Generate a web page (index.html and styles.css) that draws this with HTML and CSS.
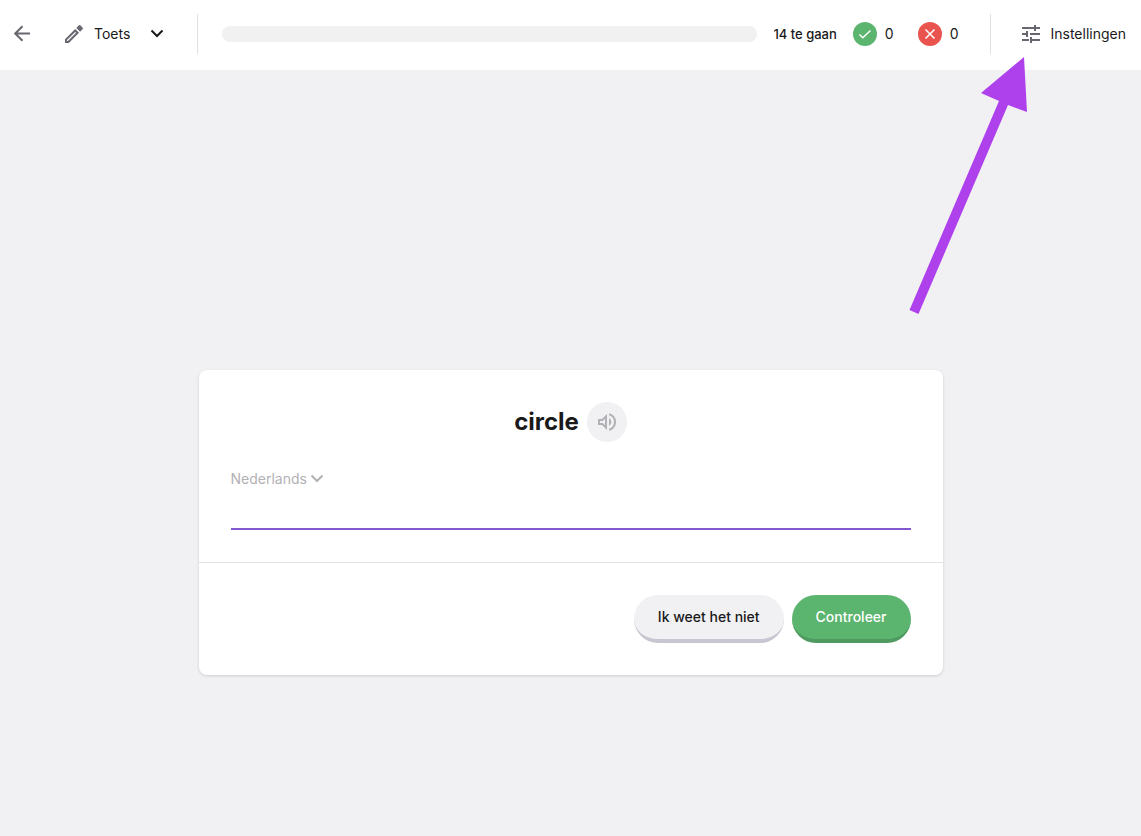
FILE: index.html
```html
<!DOCTYPE html>
<html lang="nl">
<head>
  <meta charset="UTF-8">
  <meta name="viewport" content="width=device-width, initial-scale=1.0">
  <title>Toets</title>
  <link rel="stylesheet" href="styles.css">
</head>
<body>
  <header class="topbar">
    <div class="mode">
      <button type="button" class="icon-button" aria-label="Terug">
        <svg width="20" height="20" viewBox="0 0 20 20" fill="none" stroke="#69666f" stroke-width="2"><path d="M18 9.500H3.500M10.500 2.200L3.200 9.500l7.300 7.300"/></svg>
      </button>
      <div class="mode-picker">
        <svg width="20" height="20" viewBox="0 0 20 20"><path fill="#69666f" fill-rule="evenodd" d="M1 15.2V19h3.8L15 8.8 11.2 5zM3 16.1l8.2-8.2.9.9L3.9 17H3zM12.3 3.9l3.8 3.8 2.6-2.6a1 1 0 0 0 0-1.4l-2.4-2.4a1 1 0 0 0-1.4 0z"/></svg>
        <select class="mode-select" aria-label="Modus">
          <option>Toets</option>
        </select>
        <svg class="chevron" width="14" height="10" viewBox="0 0 14 10" fill="none" stroke="#1a1a1a" stroke-width="2"><path d="M1.500 1.500L7 7l5.500-5.500"/></svg>
      </div>
    </div>

    <div class="score">
      <div class="progress"></div>
      <span class="remaining">14 te gaan</span>
      <span class="count">
        <svg width="24" height="24" viewBox="0 0 24 24" fill="none"><circle cx="12" cy="12" r="12" fill="#5bb56f"/><path stroke="#fff" stroke-width="1.500" d="M6.500 12.500l3.300 3.300 7.700-7.300"/></svg>
        0
      </span>
      <span class="count count-wrong">
        <svg width="24" height="24" viewBox="0 0 24 24" fill="none"><circle cx="12" cy="12" r="12" fill="#ea544f"/><path stroke="#fff" stroke-width="1.500" d="M7.500 7.500l9 9M16.500 7.500l-9 9"/></svg>
        0
      </span>
    </div>

    <button type="button" class="settings">
      <svg width="20" height="20" viewBox="0 0 20 20"><path fill="#69666f" d="M1 3h12v2H1zM13 1h2v6h-2zM15 3h4v2h-4zM1 9h4v2H1zM5 7h2v6H5zM9 9h10v2H9zM1 15h7v2H1zM9 13h2v6H9zM11 15h8v2h-8z"/></svg>
      Instellingen
    </button>
  </header>

  <main class="practice">
    <form class="card">
      <div class="question">
        <div class="word">
          <h1>circle</h1>
          <button type="button" class="speak" aria-label="Uitspreken">
            <svg width="20" height="20" viewBox="0 0 20 20"><path fill="#b2b1b5" fill-rule="evenodd" d="M1 7v6h4l5 5V2L5 7zM8 6.800v6.400L5.800 11H3V9h2.800zM12 6v8a4.500 4.500 0 0 0 0-8zM12 1.200v2.100a7 7 0 0 1 0 13.400v2.100a9 9 0 0 0 0-17.600z"/></svg>
          </button>
        </div>
        <div class="language">
          <select class="language-select" aria-label="Taal">
            <option>Nederlands</option>
          </select>
          <svg class="chevron" width="14" height="10" viewBox="0 0 14 10" fill="none" stroke="#b2b1b5" stroke-width="2"><path d="M1.500 1.500L7 7l5.500-5.500"/></svg>
        </div>
        <input type="text" class="answer" aria-label="Antwoord">
      </div>
      <div class="actions">
        <button type="button" class="btn btn-skip">Ik weet het niet</button>
        <button type="submit" class="btn btn-check">Controleer</button>
      </div>
    </form>
  </main>

  <!-- Arrow pointing at the settings button -->
  <svg class="arrow" width="120" height="260" viewBox="0 0 120 260">
    <path fill="#ae41ec" d="M116 1L73 37l18 8L1.500 254l9 4L100 49l19 7z"/>
  </svg>
</body>
</html>
```
FILE: styles.css
```css
* {
  box-sizing: border-box;
}
body {
  position: relative;
  margin: 0;
  min-height: 100vh;
  background-color: #f1f1f4;
  color: #1a1a1a;
  font-family: Inter, "Liberation Sans", sans-serif;
  font-size: 14px;
  line-height: 20px;
}
button, select, input {
  font: inherit;
  color: inherit;
}
button {
  border: none;
  padding: 0;
  background: none;
  cursor: pointer;
}
svg {
  display: block;
  flex: none;
}
select {
  appearance: none;
  border: none;
  padding: 0;
  background: none;
  cursor: pointer;
}

/* Top bar */
.topbar {
  display: flex;
  height: 70px;
  padding: 14px 15px 16px 12px;
  background-color: #fff;
}
.mode {
  display: flex;
  align-items: center;
  gap: 32px;
  width: 186px;
  border-right: 1px solid #e1e1e4;
}
.mode-picker {
  display: flex;
  align-items: center;
  gap: 10px;
}
.mode-select {
  width: 56px;
  margin-right: -20px;
  padding-right: 20px;
}
.mode-picker .chevron {
  margin-left: 10px;
}
.score {
  display: flex;
  flex: 1;
  align-items: center;
  gap: 16px;
  padding: 0 31px 0 24px;
}
.progress {
  flex: 1;
  height: 16px;
  border-radius: 8px;
  background-color: #f1f1f1;
}
.remaining {
  font-size: 13px;
  font-weight: 500;
}
.count {
  display: flex;
  align-items: center;
  gap: 8px;
}
.count-wrong {
  margin-left: 8px;
}
.settings {
  display: flex;
  align-items: center;
  gap: 10px;
  padding-left: 30px;
  border-left: 1px solid #e1e1e4;
}

/* Question card */
.practice {
  padding: 300px 16px 32px;
}
.card {
  max-width: 744px;
  margin: 0 auto;
  border-radius: 8px;
  background-color: #fff;
  box-shadow: 0 1px 3px rgba(0, 0, 0, 0.15);
}
.question {
  padding: 32px;
  border-bottom: 1px solid #e3e3e5;
}
.word {
  display: flex;
  justify-content: center;
  align-items: center;
  gap: 8px;
}
.word h1 {
  margin: 0;
  font-size: 24px;
  line-height: 32px;
  font-weight: 700;
}
.speak {
  display: flex;
  justify-content: center;
  align-items: center;
  width: 40px;
  height: 40px;
  border-radius: 50%;
  background-color: #f1f1f4;
}
.language {
  display: flex;
  align-items: center;
  gap: 2px;
  margin-top: 27px;
  color: #b2b1b5;
}
.answer {
  display: block;
  width: 100%;
  height: 41px;
  padding: 0;
  border: none;
  border-bottom: 2px solid #8257d0;
  border-radius: 0;
  outline: none;
  font-size: 16px;
}
.actions {
  display: flex;
  justify-content: flex-end;
  gap: 8px;
  padding: 32px;
}
.btn {
  height: 48px;
  padding: 0 24px;
  border-bottom: 4px solid;
  border-radius: 24px;
  font-weight: 500;
}
.btn-skip {
  border-color: #c8c6d0;
  background-color: #f1f1f4;
}
.btn-check {
  border-color: #4f9a60;
  background-color: #5bb56f;
  color: #fff;
}

.arrow {
  position: absolute;
  top: 56px;
  right: 113px;
  pointer-events: none;
}
```
